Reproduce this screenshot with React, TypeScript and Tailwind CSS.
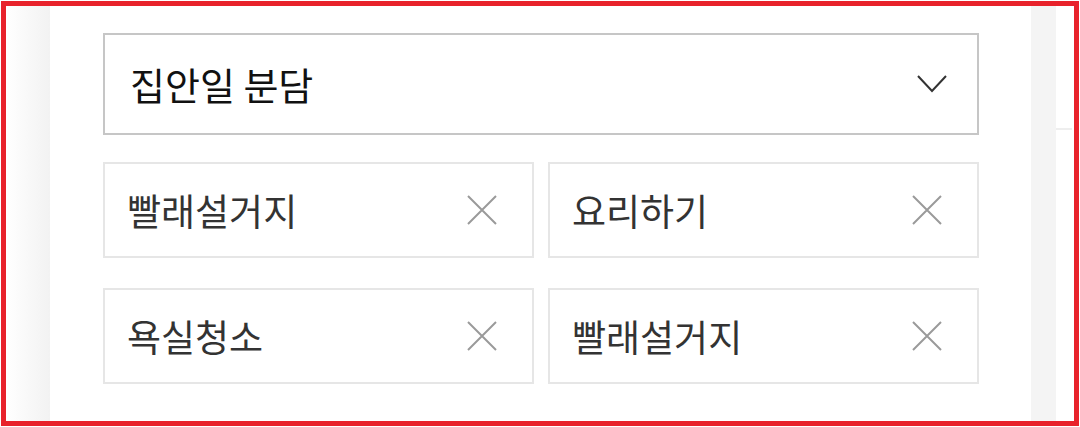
import React from "react";

const font = { fontFamily: '"Noto Sans CJK KR", "Noto Sans", sans-serif' };

function CloseIcon() {
  return (
    <svg width="30" height="30" viewBox="0 0 30 30" fill="none" stroke="#9a9a9a" strokeWidth="2">
      <path d="M1 1 L29 29 M29 1 L1 29" />
    </svg>
  );
}

function Tag({ label }: { label: string }) {
  return (
    <div className="flex h-[96px] items-center justify-between border-2 border-[#e6e6e6] bg-white pl-[22px] pr-[35px]">
      <span className="text-[37px] leading-none text-[#333333]">{label}</span>
      <CloseIcon />
    </div>
  );
}

export default function App() {
  const tags = ["빨래설거지", "요리하기", "욕실청소", "빨래설거지"];
  return (
    <div className="h-[427px] w-[1080px] bg-white p-[1px]" style={font}>
      <div className="flex h-full w-full border-[5px] border-[#e8222b]">
        {/* 왼쪽 여백 */}
        <div className="h-full w-[44px] bg-gradient-to-r from-white to-[#f2f2f2]" />

        {/* 본문 */}
        <div className="h-full w-[981px] bg-white pl-[53px] pr-[52px] pt-[27px]">
          <div className="flex h-[102px] items-center justify-between border-2 border-[#c6c6c6] pl-[25px] pr-[30px]">
            <span className="text-[38px] leading-none text-[#111111]">집안일 분담</span>
            <svg width="30" height="18" viewBox="0 0 30 18" fill="none" stroke="#333333" strokeWidth="2">
              <path d="M1 1 L15 16 L29 1" />
            </svg>
          </div>
          <div className="mt-[27px] grid grid-cols-2 gap-x-[14px] gap-y-[30px]">
            {tags.map((t, i) => (
              <Tag key={i} label={t} />
            ))}
          </div>
        </div>

        {/* 오른쪽 스크롤 영역 */}
        <div className="h-full w-[25px] bg-[#f4f4f4]" />
        <div className="h-full flex-1 bg-white pr-[2px] pt-[122px]">
          <div className="h-[2px] w-full bg-[#eeeeee]" />
        </div>
      </div>
    </div>
  );
}
